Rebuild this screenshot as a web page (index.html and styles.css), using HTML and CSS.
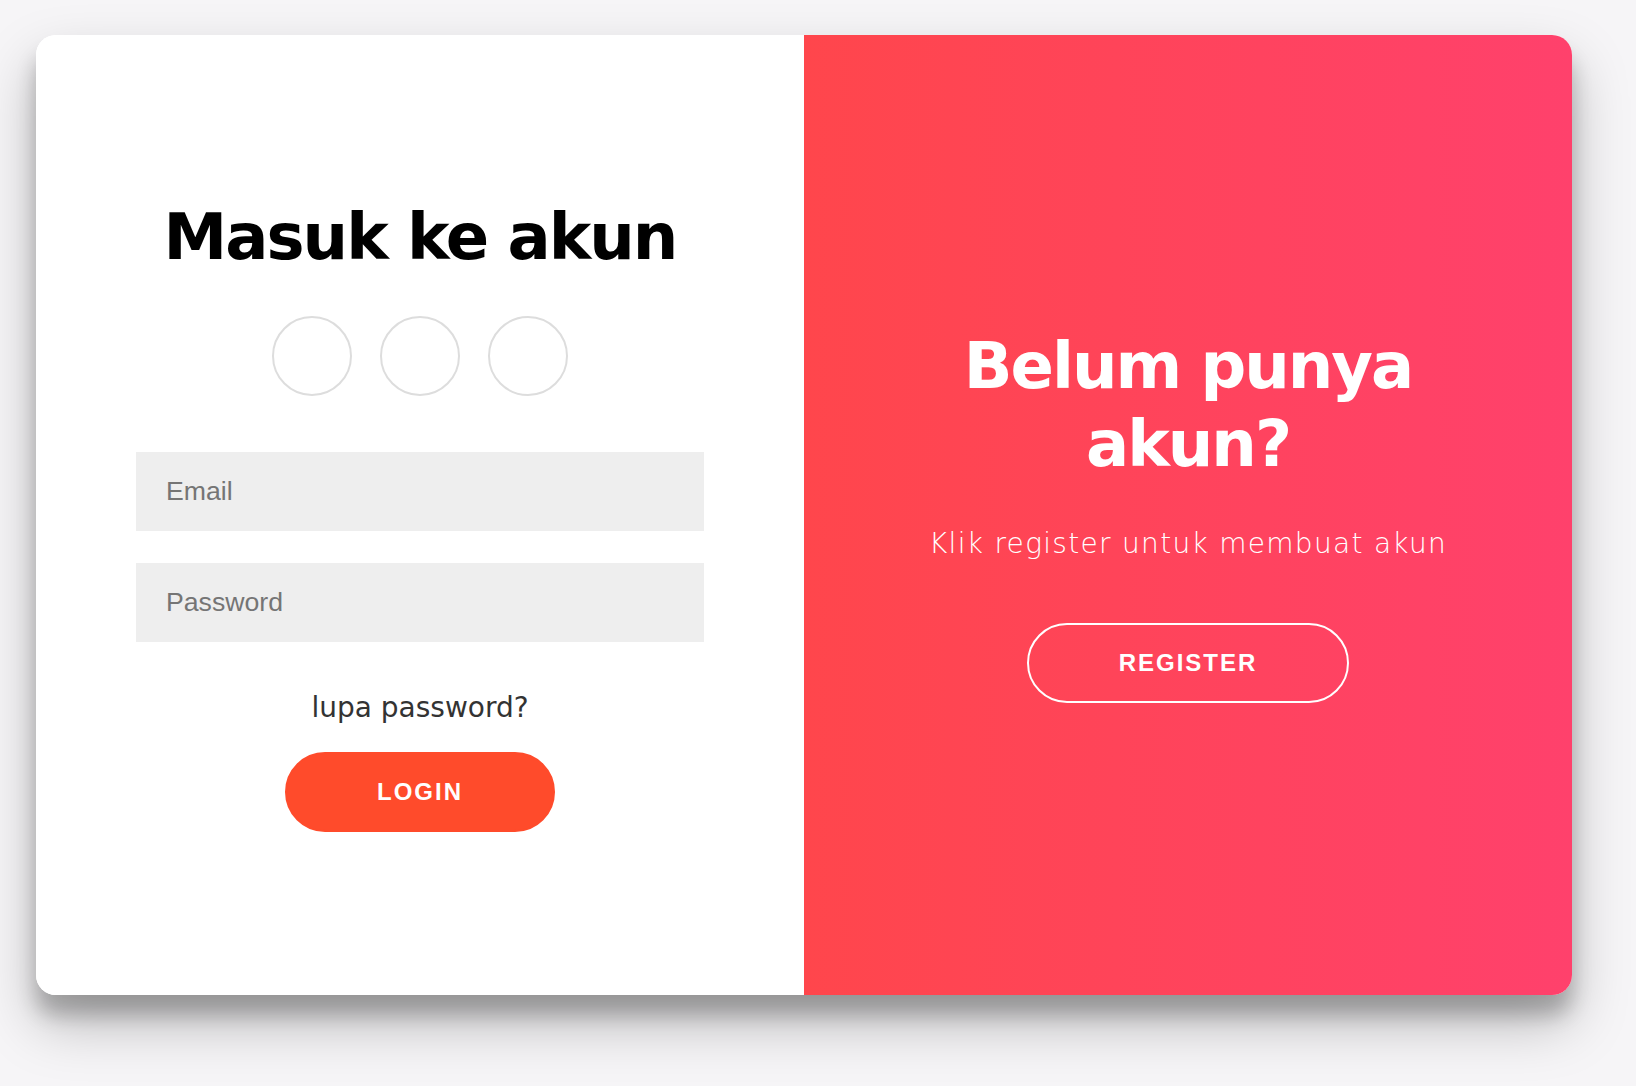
FILE: index.html
```html
<!DOCTYPE html>
<html lang="id">
<head>
<meta charset="utf-8">
<title>Masuk ke akun</title>
<link rel="stylesheet" href="styles.css">
</head>
<body>
<div class="page">
  <div class="card">
    <form class="panel signin" onsubmit="return false">
      <h1 class="title">Masuk ke akun</h1>
      <div class="social">
        <a class="social-btn" href="#" aria-label="Facebook"></a>
        <a class="social-btn" href="#" aria-label="Google"></a>
        <a class="social-btn" href="#" aria-label="LinkedIn"></a>
      </div>
      <input class="field" type="email" placeholder="Email">
      <input class="field" type="password" placeholder="Password">
      <a class="forgot" href="#">lupa password?</a>
      <button class="btn" type="button">Login</button>
    </form>
    <div class="panel overlay">
      <h1 class="title title-light">Belum punya akun?</h1>
      <p class="lead">Klik register untuk membuat akun</p>
      <button class="btn btn-ghost" type="button">Register</button>
    </div>
  </div>
</div>
</body>
</html>
```

FILE: styles.css
```css
* {
  box-sizing: border-box;
}

html, body {
  margin: 0;
  padding: 0;
  background: #f6f5f7;
}

body {
  font-family: "DejaVu Sans", "Noto Sans", sans-serif;
  min-height: 100vh;
}

.page {
  padding: 35px 0 0 36px;
}

.card {
  width: 1536px;
  height: 960px;
  display: grid;
  grid-template-columns: 768px 768px;
  border-radius: 20px;
  overflow: hidden;
  background: #ffffff;
  box-shadow: 0 28px 56px rgba(0, 0, 0, 0.25), 0 20px 20px rgba(0, 0, 0, 0.22);
}

.panel {
  display: flex;
  flex-direction: column;
  align-items: center;
  justify-content: center;
  text-align: center;
  height: 100%;
  margin: 0;
}

.signin {
  background: #ffffff;
  padding: 0 100px;
}

.overlay {
  background: linear-gradient(to right, #ff464c, #ff416c);
  color: #ffffff;
  padding: 0 80px;
}

.title {
  margin: 0;
  font-family: "DejaVu Sans", sans-serif;
  font-weight: 700;
  font-size: 64px;
  line-height: 78px;
  letter-spacing: -2px;
  color: #000000;
}

.title-light {
  color: #ffffff;
}

.social {
  display: flex;
  gap: 28px;
  margin: 40px 0;
}

.social-btn {
  display: block;
  width: 80px;
  height: 80px;
  border: 2px solid #dddddd;
  border-radius: 50%;
}

.field {
  display: block;
  width: 100%;
  margin: 16px 0;
  padding: 24px 30px;
  border: none;
  background: #eeeeee;
  font-family: "Liberation Sans", Arial, sans-serif;
  font-size: 26.667px;
  color: #333333;
  outline: none;
}

.field::placeholder {
  color: #757575;
}

.forgot {
  margin: 30px 0 27px;
  padding-top: 3px;
  font-family: "DejaVu Sans", sans-serif;
  font-size: 28px;
  line-height: 34px;
  color: #333333;
  text-decoration: none;
}

.btn {
  border-radius: 40px;
  border: 2px solid #ff4b2b;
  background: #ff4b2b;
  color: #ffffff;
  font-family: "Liberation Sans", Arial, sans-serif;
  font-size: 24px;
  font-weight: 700;
  line-height: 28px;
  padding: 24px 90px;
  letter-spacing: 2px;
  text-transform: uppercase;
  cursor: pointer;
}

.btn-ghost {
  background: transparent;
  border-color: #ffffff;
}

.lead {
  margin: 41px 0 59px;
  font-family: "DejaVu Sans", sans-serif;
  font-size: 28px;
  font-weight: 300;
  line-height: 40px;
  letter-spacing: 1.3px;
  color: #ffffff;
}
```
